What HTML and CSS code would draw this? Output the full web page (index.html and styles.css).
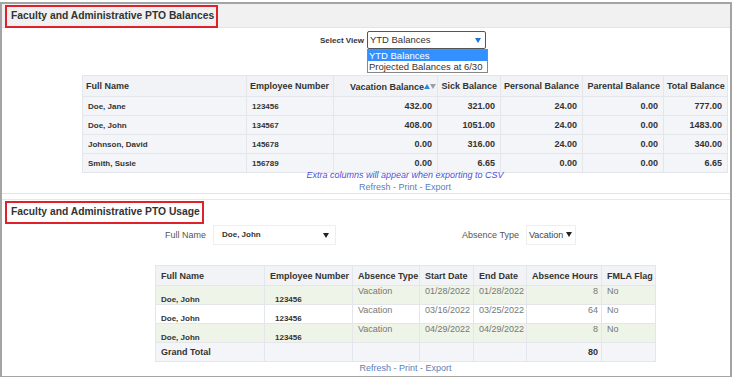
FILE: index.html
```html
<!DOCTYPE html>
<html lang="en">
<head>
    <meta charset="UTF-8">
    <title>PTO Balances</title>
    <link rel="stylesheet" href="styles.css">
</head>
<body>
    <div class="frame">
        <div class="section-head shaded">
            <h2 class="title">Faculty and Administrative PTO Balances</h2>
        </div>

        <div class="view-row">
            <span class="label">Select View</span>
            <div class="select-wrap">
                <div class="select">YTD Balances<span class="caret-blue"></span></div>
                <ul class="menu">
                    <li class="active">YTD Balances</li>
                    <li>Projected Balances at 6/30</li>
                </ul>
            </div>
        </div>

        <div class="block balances-block">
            <table class="grid balances">
                <colgroup>
                    <col style="width:164px"><col style="width:87px"><col style="width:104px"><col style="width:63px">
                    <col style="width:82px"><col style="width:81px"><col style="width:64px">
                </colgroup>
                <thead>
                    <tr>
                        <th>Full Name</th>
                        <th>Employee Number</th>
                        <th>Vacation Balance<span class="sort"><span class="up"></span><span class="down"></span></span></th>
                        <th>Sick Balance</th>
                        <th>Personal Balance</th>
                        <th>Parental Balance</th>
                        <th>Total Balance</th>
                    </tr>
                </thead>
                <tbody>
                    <tr><td>Doe, Jane</td><td class="num-id">123456</td><td class="n">432.00</td><td class="n">321.00</td><td class="n">24.00</td><td class="n">0.00</td><td class="n">777.00</td></tr>
                    <tr><td>Doe, John</td><td class="num-id">134567</td><td class="n">408.00</td><td class="n">1051.00</td><td class="n">24.00</td><td class="n">0.00</td><td class="n">1483.00</td></tr>
                    <tr><td>Johnson, David</td><td class="num-id">145678</td><td class="n">0.00</td><td class="n">316.00</td><td class="n">24.00</td><td class="n">0.00</td><td class="n">340.00</td></tr>
                    <tr><td>Smith, Susie</td><td class="num-id">156789</td><td class="n">0.00</td><td class="n">6.65</td><td class="n">0.00</td><td class="n">0.00</td><td class="n">6.65</td></tr>
                </tbody>
            </table>
            <p class="note">Extra columns will appear when exporting to CSV</p>
            <p class="links"><a>Refresh</a> - <a>Print</a> - <a>Export</a></p>
        </div>

        <div class="divider"></div>

        <div class="section-head">
            <h2 class="title">Faculty and Administrative PTO Usage</h2>
        </div>

        <div class="filters">
            <div class="filter name-filter">
                <span class="label light">Full Name</span>
                <div class="pick wide">Doe, John<span class="caret"></span></div>
            </div>
            <div class="filter type-filter">
                <span class="label light">Absence Type</span>
                <div class="pick">Vacation<span class="caret"></span></div>
            </div>
        </div>

        <div class="block usage-block">
            <table class="grid usage">
                <colgroup>
                    <col style="width:109px"><col style="width:88px"><col style="width:67px"><col style="width:54px">
                    <col style="width:53px"><col style="width:75px"><col style="width:54px">
                </colgroup>
                <thead>
                    <tr>
                        <th>Full Name</th><th>Employee Number</th><th>Absence Type</th><th>Start Date</th>
                        <th>End Date</th><th>Absence Hours</th><th>FMLA Flag</th>
                    </tr>
                </thead>
                <tbody>
                    <tr class="green"><td class="who">Doe, John</td><td class="num-id">123456</td><td class="plain">Vacation</td><td class="plain">01/28/2022</td><td class="plain">01/28/2022</td><td class="plain n">8</td><td class="plain">No</td></tr>
                    <tr><td class="who">Doe, John</td><td class="num-id">123456</td><td class="plain">Vacation</td><td class="plain">03/16/2022</td><td class="plain">03/25/2022</td><td class="plain n">64</td><td class="plain">No</td></tr>
                    <tr class="green"><td class="who">Doe, John</td><td class="num-id">123456</td><td class="plain">Vacation</td><td class="plain">04/29/2022</td><td class="plain">04/29/2022</td><td class="plain n">8</td><td class="plain">No</td></tr>
                    <tr class="total"><td class="gt">Grand Total</td><td></td><td></td><td></td><td></td><td class="n">80</td><td></td></tr>
                </tbody>
            </table>
            <p class="links bottom"><a>Refresh</a> - <a>Print</a> - <a>Export</a></p>
        </div>
    </div>
</body>
</html>
```

FILE: styles.css
```css
body {
    margin: 0;
    font-family: "Liberation Sans", Arial, sans-serif;
    color: #333;
}
.frame {
    width: 728px;
    height: 372px;
    margin-top: 2px;
    border: 2px solid #a4a4a4;
    background: #fff;
    overflow: hidden;
}
.section-head {
    height: 22px;
    padding: 1px 0 0 3px;
}
.section-head.shaded {
    background: #f1f1f1;
    border-bottom: 1px solid #e4e4e4;
}
.title {
    display: inline-block;
    margin: 0;
    padding: 3px 2px 0 4px;
    height: 16px;
    border: 2px solid #e0202a;
    font-size: 10.3px;
    font-weight: bold;
    color: #333;
}
.view-row {
    display: flex;
    align-items: center;
    margin: 3px 0 0 318px;
    height: 18px;
}
.label {
    font-size: 8px;
    font-weight: bold;
    color: #333;
    margin-right: 3px;
}
.label.light {
    font-weight: normal;
    color: #555;
    font-size: 9px;
    margin-right: 7px;
}
.select-wrap {
    position: relative;
}
.select {
    width: 115px;
    height: 16px;
    padding-left: 2px;
    border: 1px solid #555;
    border-radius: 2px;
    font-size: 9.5px;
    line-height: 16px;
    color: #333;
    position: relative;
}
.caret-blue {
    position: absolute;
    right: 4px;
    top: 6px;
    border-left: 3.5px solid transparent;
    border-right: 3.5px solid transparent;
    border-top: 5px solid #1a73d9;
}
.menu {
    position: absolute;
    left: 0;
    top: 18px;
    margin: 0;
    padding: 0;
    list-style: none;
    width: 119px;
    border: 1px solid #888;
    background: #fff;
    font-size: 9.5px;
    z-index: 2;
}
.menu li {
    height: 11px;
    line-height: 11px;
    padding-left: 1px;
    color: #333;
}
.menu li.active {
    background: #3390ff;
    color: #fff;
}
.block {
    width: max-content;
}
.balances-block {
    margin: 26px 0 0 80px;
}
.usage-block {
    margin: 21px 0 0 153px;
}
.grid {
    border-collapse: collapse;
    table-layout: fixed;
    font-size: 8px;
}
.grid th, .grid td {
    border: 1px solid #e3e7ec;
    padding: 0 5px;
    white-space: nowrap;
    overflow: hidden;
}
.grid th {
    text-align: left;
    font-weight: bold;
    font-size: 9px;
    color: #333;
    background: #f1f3f6;
}
.balances {
    width: 645px;
}
.balances th {
    height: 20px;
    padding: 0 3px;
}
.balances td {
    height: 18px;
    background: #f3f5f8;
    font-weight: bold;
    color: #333;
}
.balances th:nth-child(n+3) {
    text-align: right;
}
.balances th:nth-child(3) {
    padding-right: 1px;
}
.n {
    text-align: right;
    font-size: 9px;
}
.num-id {
    padding-left: 6px;
    font-weight: bold;
}
.sort {
    display: inline-block;
    vertical-align: 1px;
}
.sort .up, .sort .down {
    display: inline-block;
    border-left: 3.5px solid transparent;
    border-right: 3.5px solid transparent;
}
.sort .up {
    border-bottom: 5px solid #2a8ae0;
}
.sort .down {
    border-top: 5px solid #9aa0a8;
}
.note {
    margin: -3px 0 0;
    line-height: 11px;
    text-align: center;
    font-size: 9px;
    font-style: italic;
    color: #4d4de0;
}
.links {
    margin: 1px 0 0;
    line-height: 11px;
    text-align: center;
    font-size: 9px;
    color: #777;
}
.links a {
    color: #5a80b8;
}
.divider {
    margin-top: 0;
    height: 5px;
    border-top: 1px solid #e2e2e2;
    border-bottom: 1px solid #e4e9f0;
}
.filters {
    display: flex;
    margin: 3px 0 0 163px;
    height: 18px;
}
.filter {
    display: flex;
    align-items: center;
}
.type-filter {
    margin-left: 126px;
}
.pick {
    height: 18px;
    line-height: 18px;
    padding: 0 3px 0 2px;
    border: 1px solid #eee;
    font-size: 9px;
    color: #444;
    position: relative;
}
.pick.wide {
    width: 110px;
    padding-left: 8px;
    font-weight: bold;
    font-size: 8px;
    color: #333;
}
.caret {
    display: inline-block;
    margin-left: 3px;
    border-left: 3.5px solid transparent;
    border-right: 3.5px solid transparent;
    border-top: 5px solid #222;
    vertical-align: 1px;
}
.pick.wide .caret {
    position: absolute;
    right: 6px;
    top: 7px;
}
.usage {
    width: 500px;
}
.usage th {
    height: 19px;
}
.usage td {
    height: 18px;
    background: #fff;
}
.usage tr.green td {
    background: #eef4e8;
}
.usage tr.total td {
    background: #f3f5f8;
}
.who {
    font-weight: bold;
    vertical-align: bottom;
    padding-left: 6px;
}
.usage .num-id {
    padding-left: 10px;
    vertical-align: bottom;
}
.plain {
    color: #777;
    font-size: 9px;
    vertical-align: top;
    padding-top: 1px;
}
.plain.n {
    padding-right: 3px;
}
.gt {
    font-weight: bold;
    font-size: 9px;
}
.total .n {
    font-weight: bold;
    padding-right: 3px;
}
.links.bottom {
    margin-top: 1px;
}
```
